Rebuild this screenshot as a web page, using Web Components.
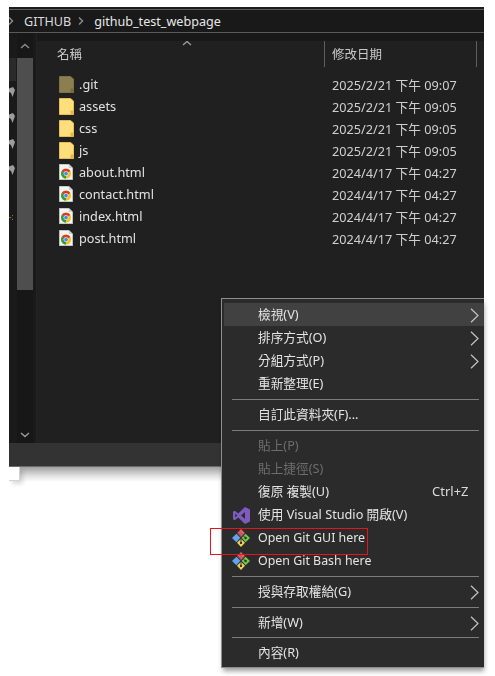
<!DOCTYPE html>
<html lang="zh-Hant"><head><meta charset="utf-8"><title>github_test_webpage</title>
<style>
html,body{margin:0;padding:0;background:#fff}
body{width:495px;height:676px;overflow:hidden;position:relative;font-family:"Noto Sans","Noto Sans CJK TC",sans-serif}
</style></head><body>
<explorer-window>
  <path-crumb slot="crumbs"><span>GITHUB</span></path-crumb>
  <path-crumb slot="crumbs" current><span>github_test_webpage</span></path-crumb>
  <file-row slot="files" icon="git" date="2025/2/21 下午 09:07">.git</file-row>
  <file-row slot="files" icon="folder" date="2025/2/21 下午 09:05">assets</file-row>
  <file-row slot="files" icon="folder" date="2025/2/21 下午 09:05">css</file-row>
  <file-row slot="files" icon="folder" date="2025/2/21 下午 09:05">js</file-row>
  <file-row slot="files" icon="chrome" date="2024/4/17 下午 04:27">about.html</file-row>
  <file-row slot="files" icon="chrome" date="2024/4/17 下午 04:27">contact.html</file-row>
  <file-row slot="files" icon="chrome" date="2024/4/17 下午 04:27">index.html</file-row>
  <file-row slot="files" icon="chrome" date="2024/4/17 下午 04:27">post.html</file-row>
</explorer-window>
<context-menu>
  <menu-item active arrow>檢視(V)</menu-item>
  <menu-item arrow>排序方式(O)</menu-item>
  <menu-item arrow>分組方式(P)</menu-item>
  <menu-item>重新整理(E)</menu-item>
  <menu-sep></menu-sep>
  <menu-item>自訂此資料夾(F)...</menu-item>
  <menu-sep></menu-sep>
  <menu-item disabled>貼上(P)</menu-item>
  <menu-item disabled>貼上捷徑(S)</menu-item>
  <menu-item shortcut="Ctrl+Z">復原 複製(U)</menu-item>
  <menu-item icon="vs">使用 Visual Studio 開啟(V)</menu-item>
  <menu-item icon="git">Open Git GUI here</menu-item>
  <menu-item icon="git">Open Git Bash here</menu-item>
  <menu-sep></menu-sep>
  <menu-item arrow>授與存取權給(G)</menu-item>
  <menu-sep></menu-sep>
  <menu-item arrow>新增(W)</menu-item>
  <menu-sep short></menu-sep>
  <menu-item>內容(R)</menu-item>
</context-menu>
<red-mark></red-mark>
<script>
const ICONS={
 folder:'<svg width="15" height="17" viewBox="0 0 15 17"><path d="M0.5 0.5H11.5L14.5 3V16.5H0.5Z" fill="#ffdf7c" stroke="#e8bd55"/><path d="M11.5 16.5V12.5H14.5V16.5Z" fill="#e3b548"/></svg>',
 git:'<svg width="15" height="17" viewBox="0 0 15 17"><path d="M0.5 0.5H11.5L14.5 3V16.5H0.5Z" fill="#8b7f52" stroke="#7d7145"/><path d="M11.5 16.5V12.5H14.5V16.5Z" fill="#75693e"/></svg>',
 chrome:'<svg width="14" height="16" viewBox="0 0 14 16"><path d="M0.3 0.3H9.8L13.7 4V15.7H0.3Z" fill="#f4f4f4" stroke="#cfcfcf" stroke-width=".6"/><path d="M9.8 .3V4H13.7Z" fill="#cfcfcf"/><circle cx="7" cy="9.6" r="5" fill="#f2c21a"/><path d="M7 9.6L2.7 7.1A5 5 0 0 1 11.3 7.1Z" fill="#d93a30"/><path d="M7 9.6L2.7 7.1A5 5 0 0 0 7 14.6Z" fill="#2f9e4a"/><circle cx="7" cy="9.6" r="2.4" fill="#fff"/><circle cx="7" cy="9.6" r="1.9" fill="#4a8bdc"/></svg>',
 vs:'<svg width="17" height="17" viewBox="0 0 17 17"><path d="M12 0L17 2.4V14.6L12 17L5.2 10.6L1.8 13.2L0 12.2V4.8L1.8 3.8L5.2 6.4ZM12 5L8 8.5L12 12ZM2.2 6.5V10.5L4.3 8.5Z" fill="#7f5bc0" fill-rule="evenodd"/></svg>',
 gitlogo:'<svg width="18" height="18" viewBox="0 0 18 18"><path d="M4.4 4.7L8.4 8.8L4.4 13.2L0 9Z" fill="#62a3f0"/><path d="M13.6 4.7L18 9L13.6 13.2L9.6 8.8Z" fill="#74c74b"/><path d="M9 9.8L13 13.8L9 18L5 13.8Z" fill="#f0d25a"/><path d="M9 0L12.8 4L9 8L5.2 4Z" fill="#e0606e"/><path d="M7 2.4L11 6.4M6.2 4L9.5 7.4" stroke="#8e3a45" stroke-width=".7"/><circle cx="13.6" cy="9" r="1.2" fill="#2a3a20"/><circle cx="9" cy="13.9" r="1.2" fill="#3b3518"/><path d="M11.2 6.8L13.6 9M9 10V13.9" stroke="#2a2a2a" stroke-width=".9"/></svg>'
};
const chev=(c,d)=>`<svg width="10" height="6" viewBox="0 0 10 6"><path d="${d}" fill="none" stroke="${c}" stroke-width="1.4"/></svg>`;
const pin='<svg width="6" height="10" viewBox="0 0 6 10"><path d="M0 1.5L4 0L6 3L3.5 10L2 6L0 5Z" fill="#9c9c9c"/></svg>';
function def(name,css,html){
  customElements.define(name,class extends HTMLElement{
    connectedCallback(){
      if(this.shadowRoot)return;
      const r=this.attachShadow({mode:'open'});
      r.innerHTML='<style>'+css+'</style>'+(typeof html==='function'?html(this):html);
    }
  });
}
def('path-crumb',`:host{display:inline-flex;align-items:center;font-size:12.6px;color:#dcdcdc;flex:none;margin-left:-2px}
 :host([current]){color:#e8e8e8;margin-left:0}
 .sep{display:inline-flex;width:17px;flex:none}`,
 ()=>'<span class="sep"><svg width="8" height="10" viewBox="0 0 8 10"><path d="M2 1.5L5.5 5L2 8.5" fill="none" stroke="#8a8a8a" stroke-width="1.5"/></svg></span><slot></slot>');
def('file-row',`:host{display:grid;grid-template-columns:20px 253px 1fr;height:22px;align-items:center;font-size:12.7px;color:#e2e2e2;white-space:nowrap}
 .i{display:flex;align-items:center;height:17px}
 .d{color:#cfcfcf}`,
 h=>`<span class="i">${ICONS[h.getAttribute('icon')]}</span><span><slot></slot></span><span class="d">${h.getAttribute('date')}</span>`);
def('explorer-window',`:host{display:flex;flex-direction:column;margin:7px 0 0 9px;width:475px;height:460px;background:#1b1b1b;position:relative;overflow:visible}
 .soft{display:flex;flex-direction:column;height:100%;filter:blur(.3px);overflow:hidden}
 .top{height:2px;background:#1c1c1c;border-bottom:1px solid #5a5a5a;flex:none}
 .bar{height:22px;background:#191919;border-bottom:1px solid #5a5a5a;display:flex;align-items:center;gap:6px;overflow:hidden;flex:none}
 .body{flex:1;display:flex;min-height:0}
 .nav{width:8px;background:#1a1a1a;flex:none;display:flex;flex-direction:column;align-items:flex-start;overflow:hidden}
 .nav .sel{height:23px;width:7px;background:#2a2a2a;margin-top:25px;margin-bottom:6px;flex:none}
 .nav .pin{height:26px;flex:none;display:flex}
 .nav .ms{font:8px/10px "Noto Sans";color:#c98a4a;margin-top:21px;flex:none}
 .sb{width:16px;flex:none;background:#171717;display:flex;flex-direction:column;align-items:center}
 .sb .up{height:25px;display:flex;align-items:center;justify-content:center;flex:none}
 .sb .th{height:232px;width:16px;background:#4e4e4e;flex:none}
 .sb .dn{margin-top:auto;height:16px;display:flex;align-items:center;justify-content:center}
 .gut{width:3px;background:#1a1a1a;border-right:1px solid #232323;flex:none}
 .main{flex:1;background:#202020;display:flex;flex-direction:column;border-top:8px solid #191919;min-width:0;overflow:hidden}
 .hd{height:26px;display:grid;grid-template-columns:287px 152px 1fr;font-size:12.5px;color:#c9c9c9;position:relative;flex:none}
 .hd div{display:flex;align-items:center;box-sizing:border-box;padding:0 0 2px 20px}
 .hd div+div{border-left:1px solid #5e5e5e;padding-left:7px}
 .hd .sort{position:absolute;left:145px;top:-1px;padding:0;height:6px;border:0}
 .files{padding:6px 0 0 22px;display:flex;flex-direction:column}
 .status{height:24px;background:#333;border-bottom:1px solid #6a6a6a;box-sizing:border-box;flex:none}
 .shade{position:absolute;left:0;right:0;top:460px;height:15px;background:linear-gradient(#a0a0a0,#e2e2e2 60%,#fff)}
 .peek{position:absolute;left:0;top:460px;width:11px;height:14px;background:#fff;border:solid #d4d4d4;border-width:0 1px 1px 0;box-sizing:border-box;box-shadow:3px 3px 4px rgba(0,0,0,.14)}`,
 ()=>`<div class="shade"></div><div class="peek"></div><div class="soft"><div class="top"></div>
 <div class="bar"><slot name="crumbs"></slot></div>
 <div class="body">
  <div class="nav"><div class="sel"></div><div class="pin">${pin}</div><div class="pin">${pin}</div><div class="pin">${pin}</div><div class="pin">${pin}</div><div class="ms">-:</div></div>
  <div class="sb"><div class="up">${chev('#8c8c8c','M1 5L5 1.5L9 5')}</div><div class="th"></div><div class="dn">${chev('#9a9a9a','M1 1L5 4.5L9 1')}</div></div>
  <div class="gut"></div>
  <div class="main">
   <div class="hd"><div>名稱</div><div>修改日期</div><div></div><div class="sort">${chev('#9a9a9a','M1 5L5 1.5L9 5')}</div></div>
   <div class="files"><slot name="files"></slot></div>
  </div>
 </div>
 <div class="status"></div></div>`);
def('context-menu',`:host{display:block;position:absolute;left:221px;top:298px;width:263px;height:370px;box-shadow:1px 4px 5px -1px rgba(0,0,0,.4)}
 .soft{display:flex;flex-direction:column;height:100%;box-sizing:border-box;padding:4px 0 4px 2px;background:#2b2b2b;border:solid #8e8e8e;border-width:1px 0 1px 1px;filter:blur(.3px);overflow:hidden}`,'<div class="soft"><slot></slot></div>');
def('menu-sep',`:host{display:flex;align-items:center;height:8px;padding:0 5px 0 8px;flex:none}
 :host([short]){height:7px}
 div{height:1px;background:#7c7c7c;flex:1}`,'<div></div>');
def('menu-item',`:host{display:flex;align-items:center;height:23px;box-sizing:border-box;padding:0 0 2px 34px;flex:none;font-size:12.7px;color:#e4e4e4;white-space:nowrap;position:relative}
 :host([active]){background:#414141}
 :host([disabled]){color:#6d6d6d}
 :host([icon="git"]){font-size:12.4px;padding-bottom:0}
 .ic{position:absolute;left:8px;top:3px;display:flex;width:18px;height:18px;align-items:center;justify-content:center}
 .sc{position:absolute;left:208px;color:#dcdcdc;font-size:13px}
 .ar{position:absolute;left:246px;top:5px;display:flex}`,
 h=>{const ic=h.getAttribute('icon'),sc=h.getAttribute('shortcut');
 return (ic?`<span class="ic">${ic==='vs'?ICONS.vs:ICONS.gitlogo}</span>`:'')+'<slot></slot>'+(sc?`<span class="sc">${sc}</span>`:'')+(h.hasAttribute('arrow')?'<span class="ar"><svg width="9" height="15" viewBox="0 0 9 15"><path d="M1 .7L8 7.5L1 14.3" fill="none" stroke="#c4c4c4" stroke-width="1.2"/></svg></span>':'');});
def('red-mark',`:host{display:block;position:absolute;left:210px;top:528px;width:158px;height:27px;box-sizing:border-box;border:1px solid #e8141c}`,'');
</script>
</body></html>
